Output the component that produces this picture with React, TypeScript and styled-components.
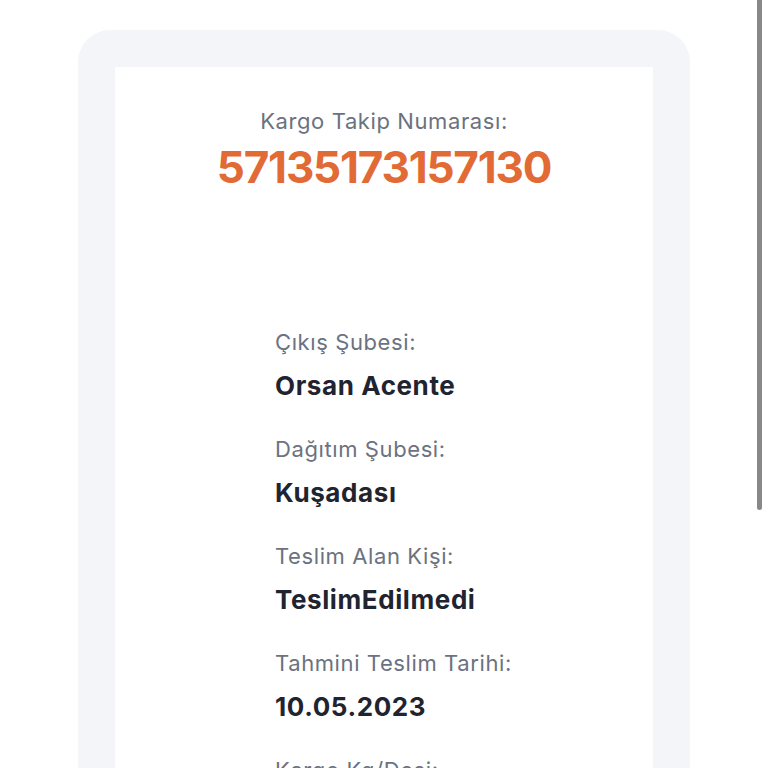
import styled, { createGlobalStyle } from "styled-components"

const GlobalStyle = createGlobalStyle`
html, body {
    margin: 0;
    padding: 0;
    background: #ffffff;
    font-family: Inter, "Noto Sans", sans-serif;
    overflow: hidden;
}
* {
    box-sizing: border-box;
}
`

const Page = styled.main`
padding: 30px 78px 0 78px;
`

const Frame = styled.section`
background-color: #f4f5f8;
border-radius: 32px 32px 0 0;
padding: 37px 37px 0 37px;
`

const Card = styled.div`
background-color: #ffffff;
padding: 40px 0 120px 0;
`

const Header = styled.div`
display: flex;
flex-direction: column;
align-items: center;
gap: 7px;
`

const HeaderLabel = styled.span`
font-size: 22px;
line-height: 28px;
letter-spacing: 0.6px;
color: #6b7280;
`

const TrackingNumber = styled.span`
font-size: 44px;
line-height: 50px;
font-weight: 700;
color: #e26a35;
letter-spacing: -1.2px;
`

const DetailList = styled.dl`
margin: 136px 0 0 0;
padding-left: 160px;
display: flex;
flex-direction: column;
gap: 33px;
`

const DetailRow = styled.div`
display: flex;
flex-direction: column;
gap: 14px;
`

const DetailLabel = styled.dt`
font-size: 22px;
line-height: 28px;
letter-spacing: 0.6px;
color: #6b7280;
`

const DetailValue = styled.dd`
margin: 0;
font-size: 26px;
line-height: 32px;
font-weight: 700;
letter-spacing: 0.6px;
color: #1f2430;
`

const ScrollThumb = styled.div`
position: fixed;
top: -4px;
right: 6px;
width: 5px;
height: 514px;
border-radius: 3px;
background-color: #888888;
`

const details = [
    { label: "Çıkış Şubesi:", value: "Orsan Acente" },
    { label: "Dağıtım Şubesi:", value: "Kuşadası" },
    { label: "Teslim Alan Kişi:", value: "TeslimEdilmedi" },
    { label: "Tahmini Teslim Tarihi:", value: "10.05.2023" },
    { label: "Kargo Kg/Desi:", value: "1" },
    { label: "Gönderi Tipi:", value: "Koli" },
]

export default function App() {
    return (
        <>
            <GlobalStyle />
            <Page>
                <Frame>
                    <Card>
                        <Header>
                            <HeaderLabel>Kargo Takip Numarası:</HeaderLabel>
                            <TrackingNumber>57135173157130</TrackingNumber>
                        </Header>
                        <DetailList>
                            {details.map(d => (
                                <DetailRow key={d.label}>
                                    <DetailLabel>{d.label}</DetailLabel>
                                    <DetailValue>{d.value}</DetailValue>
                                </DetailRow>
                            ))}
                        </DetailList>
                    </Card>
                </Frame>
            </Page>
            <ScrollThumb />
        </>
    )
}
